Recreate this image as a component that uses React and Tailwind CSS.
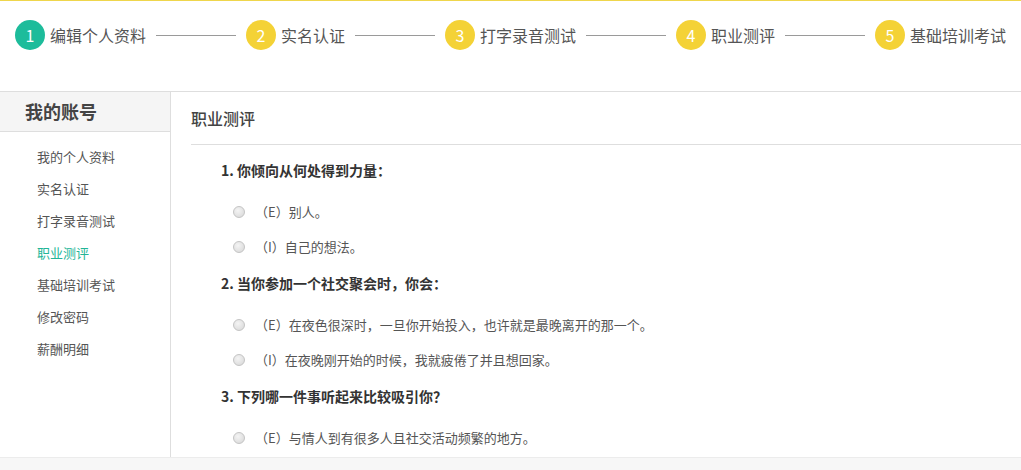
import React from "react";

const steps = ["编辑个人资料", "实名认证", "打字录音测试", "职业测评", "基础培训考试"];

const menu = ["我的个人资料", "实名认证", "打字录音测试", "职业测评", "基础培训考试", "修改密码", "薪酬明细"];

const questions = [
  {
    title: "1. 你倾向从何处得到力量：",
    options: ["（E）别人。", "（I）自己的想法。"],
  },
  {
    title: "2. 当你参加一个社交聚会时，你会：",
    options: [
      "（E）在夜色很深时，一旦你开始投入，也许就是最晚离开的那一个。",
      "（I）在夜晚刚开始的时候，我就疲倦了并且想回家。",
    ],
  },
  {
    title: "3. 下列哪一件事听起来比较吸引你？",
    options: ["（E）与情人到有很多人且社交活动频繁的地方。"],
  },
];

const Radio = () => (
  <span className="inline-block w-[12px] h-[12px] rounded-full border border-[#c4c4c4] bg-[radial-gradient(circle_at_40%_35%,#f4f4f4,#d6d6d6)] shrink-0" />
);

export default function App() {
  return (
    <div
      className="w-[1021px] h-[470px] overflow-hidden bg-white text-[#555]"
      style={{ fontFamily: '"Noto Sans CJK SC", "Liberation Sans", sans-serif' }}
    >
      {/* steps header */}
      <div className="h-[92px] border-t border-[#efd64c] border-b border-b-[#dedede]">
        <div className="flex items-center pl-[15px] pt-[19px]">
          {steps.map((s, i) => (
            <React.Fragment key={s}>
              <div className="flex items-center">
                <span
                  className={
                    "w-[30px] h-[30px] rounded-full flex items-center justify-center text-white text-[16px] " +
                    (i === 0 ? "bg-[#1dbc9b]" : "bg-[#f4d236]")
                  }
                >
                  {i + 1}
                </span>
                <span className="ml-[5px] text-[16px] leading-[30px] text-[#555]">{s}</span>
              </div>
              {i < steps.length - 1 && <div className="w-[80px] h-px bg-[#9a9a9a] mx-[10px]" />}
            </React.Fragment>
          ))}
        </div>
      </div>

      {/* body */}
      <div className="flex h-[365px]">
        <div className="w-[171px] shrink-0 border-r border-[#dedede]">
          <div className="h-[40px] bg-[#f5f5f5] border-b border-[#dedede] pl-[25px] flex items-center">
            <span className="text-[18px] font-bold text-[#444]">我的账号</span>
          </div>
          <ul className="pt-[9px] pl-[37px]">
            {menu.map((m) => (
              <li
                key={m}
                className={"h-8 leading-8 text-[13px] " + (m === "职业测评" ? "text-[#22b597]" : "text-[#555]")}
              >
                {m}
              </li>
            ))}
          </ul>
        </div>

        <div className="flex-1 pl-[20px]">
          <div className="pt-[14px] pb-[14px] border-b border-[#dedede]">
            <h2 className="text-[16px] leading-6 font-medium text-[#444]">职业测评</h2>
          </div>
          <div className="pl-[30px]">
            {questions.map((q, qi) => (
              <div key={qi} className={qi === 0 ? "mt-[15px]" : "mt-[9px]"}>
                <p className="text-[14px] leading-5 font-bold text-[#333]">{q.title}</p>
                <div className="pt-[14px] pl-[12px]">
                  {q.options.map((o) => (
                    <label key={o} className="h-[35px] flex items-center gap-[10px] text-[13px] text-[#555]">
                      <Radio />
                      <span>{o}</span>
                    </label>
                  ))}
                </div>
              </div>
            ))}
          </div>
        </div>
      </div>

      <div className="h-[13px] bg-[#f7f7f7] border-t border-[#ececec]" />
    </div>
  );
}
